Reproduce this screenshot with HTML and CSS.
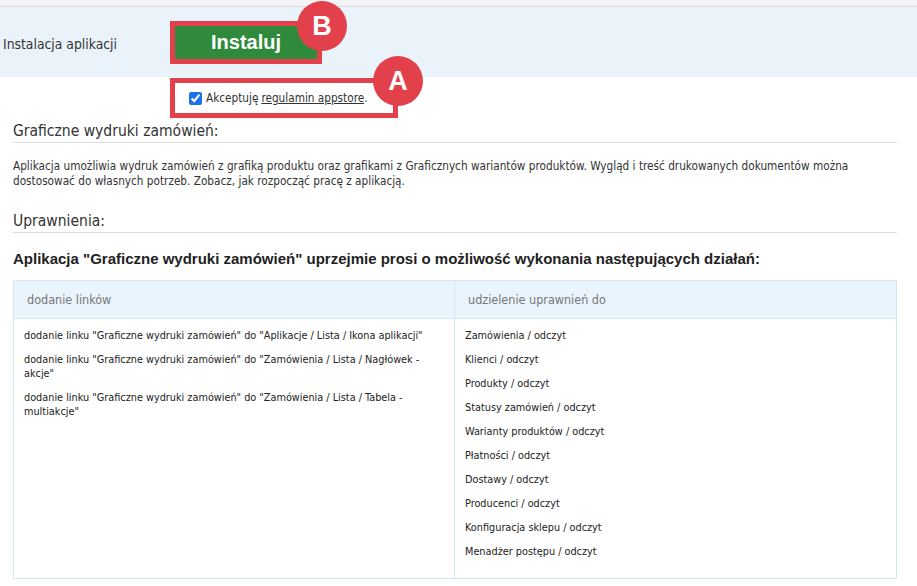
FILE: index.html
```html
<!DOCTYPE html>
<html>
  <head>
    <meta charset="UTF-8">
    <title>Instalacja aplikacji</title>
    <link rel="stylesheet" href="styles.css">
  </head>
  <body>
    <div class="topbar"></div>

    <div class="install-row">
      <div class="install-label">Instalacja aplikacji</div>
      <div class="mark mark-b">
        <button class="btn-install">Instaluj</button>
        <span class="badge badge-b">B</span>
      </div>
    </div>

    <div class="accept-row">
      <div class="mark mark-a">
        <label class="accept"><input type="checkbox" checked> Akceptuję <a href="#">regulamin appstore</a>.</label>
        <span class="badge badge-a">A</span>
      </div>
    </div>

    <div id="main">
      <h2 class="section-title">Graficzne wydruki zamówień:</h2>
      <p class="desc">Aplikacja umożliwia wydruk zamówień z grafiką produktu oraz grafikami z Graficznych wariantów produktów. Wygląd i treść drukowanych dokumentów można dostosować do własnych potrzeb. Zobacz, jak rozpocząć pracę z aplikacją.</p>

      <h2 class="section-title">Uprawnienia:</h2>
      <p class="perm-intro">Aplikacja "Graficzne wydruki zamówień" uprzejmie prosi o możliwość wykonania następujących działań:</p>

      <table class="perms">
        <thead>
          <tr>
            <th>dodanie linków</th>
            <th>udzielenie uprawnień do</th>
          </tr>
        </thead>
        <tbody>
          <tr>
            <td>
              <ul>
                <li>dodanie linku "Graficzne wydruki zamówień" do "Aplikacje / Lista / Ikona aplikacji"</li>
                <li>dodanie linku "Graficzne wydruki zamówień" do "Zamówienia / Lista / Nagłówek - akcje"</li>
                <li>dodanie linku "Graficzne wydruki zamówień" do "Zamówienia / Lista / Tabela - multiakcje"</li>
              </ul>
            </td>
            <td>
              <ul class="rights">
                <li>Zamówienia / odczyt</li>
                <li>Klienci / odczyt</li>
                <li>Produkty / odczyt</li>
                <li>Statusy zamówień / odczyt</li>
                <li>Warianty produktów / odczyt</li>
                <li>Płatności / odczyt</li>
                <li>Dostawy / odczyt</li>
                <li>Producenci / odczyt</li>
                <li>Konfiguracja sklepu / odczyt</li>
                <li>Menadżer postępu / odczyt</li>
              </ul>
            </td>
          </tr>
        </tbody>
      </table>
    </div>
  </body>
</html>
```

FILE: styles.css
```css
body {
  margin: 0;
  background: #fff;
  font-family: "DejaVu Sans Condensed", "DejaVu Sans", sans-serif;
  font-size: 11.7px;
  color: #333;
}

.topbar {
  height: 6px;
  background: #f3f3f6;
  border-bottom: 1px solid #dedede;
}

.install-row {
  display: flex;
  align-items: center;
  height: 70px;
  background: #ebf3fa;
  padding-left: 3px;
}

.install-label {
  width: 167px;
  font-size: 13.8px;
  color: #333;
  margin-top: 4px;
}

.mark {
  position: relative;
  border: 5px solid #e2414b;
}

.mark-b {
  width: 142px;
  height: 33px;
}

.btn-install {
  display: block;
  width: 100%;
  height: 100%;
  border: 0;
  background: #2f8b3b;
  color: #fff;
  font-family: "Liberation Sans", Arial, sans-serif;
  font-weight: bold;
  font-size: 20px;
  padding: 0;
}

.badge {
  position: absolute;
  width: 50px;
  height: 50px;
  border-radius: 50%;
  background: #e2414b;
  color: #fff;
  font-family: "Liberation Sans", Arial, sans-serif;
  font-weight: bold;
  font-size: 27px;
  line-height: 50px;
  text-align: center;
}

.badge-b {
  right: -30px;
  top: -25px;
}

.badge-a {
  right: -30px;
  top: -27px;
}

.accept-row {
  padding-left: 170px;
  padding-top: 1px;
}

.mark-a {
  width: 218px;
  height: 30px;
  display: flex;
  align-items: center;
}

.accept {
  display: flex;
  align-items: center;
  margin-left: 14px;
  color: #333;
}

.accept input {
  width: 13px;
  height: 13px;
  margin: 0 4px 0 0;
  accent-color: #1a73e8;
}

.accept a {
  color: #333;
  margin-left: 3px;
}

#main {
  padding: 0 20px 0 13px;
}

.section-title {
  font-weight: normal;
  font-size: 15.5px;
  color: #333;
  margin: 4px 0 0;
  padding-bottom: 2px;
  border-bottom: 1px solid #dcdcdc;
}

.desc {
  margin: 16px 0 23px;
  line-height: 15px;
}

.perm-intro {
  font-family: "Liberation Sans", Arial, sans-serif;
  font-weight: bold;
  font-size: 15px;
  color: #222;
  margin: 17px 0 13px;
}

.perms {
  width: 100%;
  border-collapse: collapse;
  border: 1px solid #d5e6f5;
}

.perms th {
  background: #eaf4fd;
  border: 1px solid #d5e6f5;
  font-weight: normal;
  font-size: 12.5px;
  color: #777;
  text-align: left;
  padding: 11px 13px 11px 13px;
  height: 14px;
}

.perms th:first-child {
  width: 414px;
}

.perms td {
  vertical-align: top;
  border-right: 1px solid #d5e6f5;
  padding: 0 10px 19px 10px;
  font-size: 10.8px;
  color: #222;
}

.perms ul {
  list-style: none;
  margin: 0;
  padding: 0;
}

.perms li {
  margin-top: 10px;
  line-height: 14px;
}

.rights li {
  margin-top: 10px;
}
```
